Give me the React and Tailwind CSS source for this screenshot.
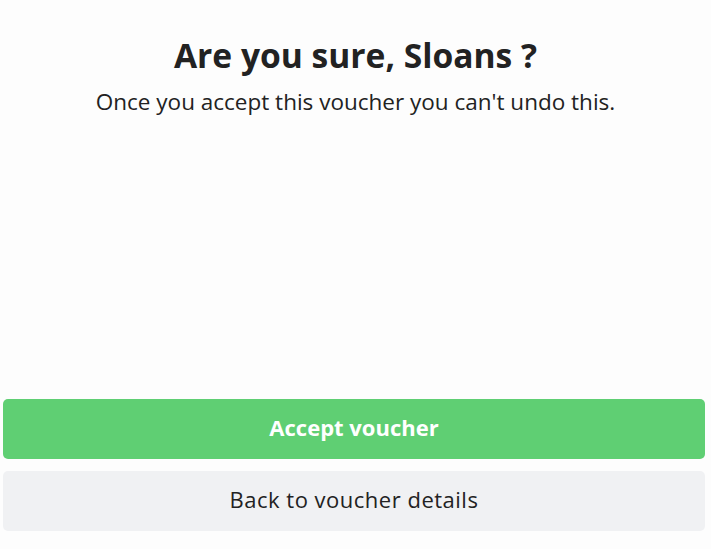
export default function App() {
  return (
    <div className="w-[711px] h-[549px] bg-[#fdfdfd] flex flex-col font-['Open_Sans',sans-serif] text-[#222222]">
      <div className="flex flex-col items-center pt-[33px]">
        <h1 className="text-[33.6px] leading-[44px] font-bold">Are you sure, Sloans ?</h1>
        <p className="mt-[11px] text-[22.5px] leading-[28px]">Once you accept this voucher you can't undo this.</p>
      </div>
      <div className="mt-auto flex flex-col gap-[12px] pl-[3px] pr-[6px] pb-[18px]">
        <button className="h-[60px] pb-[3px] rounded-[5px] bg-[#5fcf73] text-white text-[22px] font-bold">Accept voucher</button>
        <button className="h-[60px] pb-[3px] rounded-[5px] bg-[#f0f1f3] text-[#222222] text-[22px] font-medium tracking-[0.5px]">Back to voucher details</button>
      </div>
    </div>
  );
}
